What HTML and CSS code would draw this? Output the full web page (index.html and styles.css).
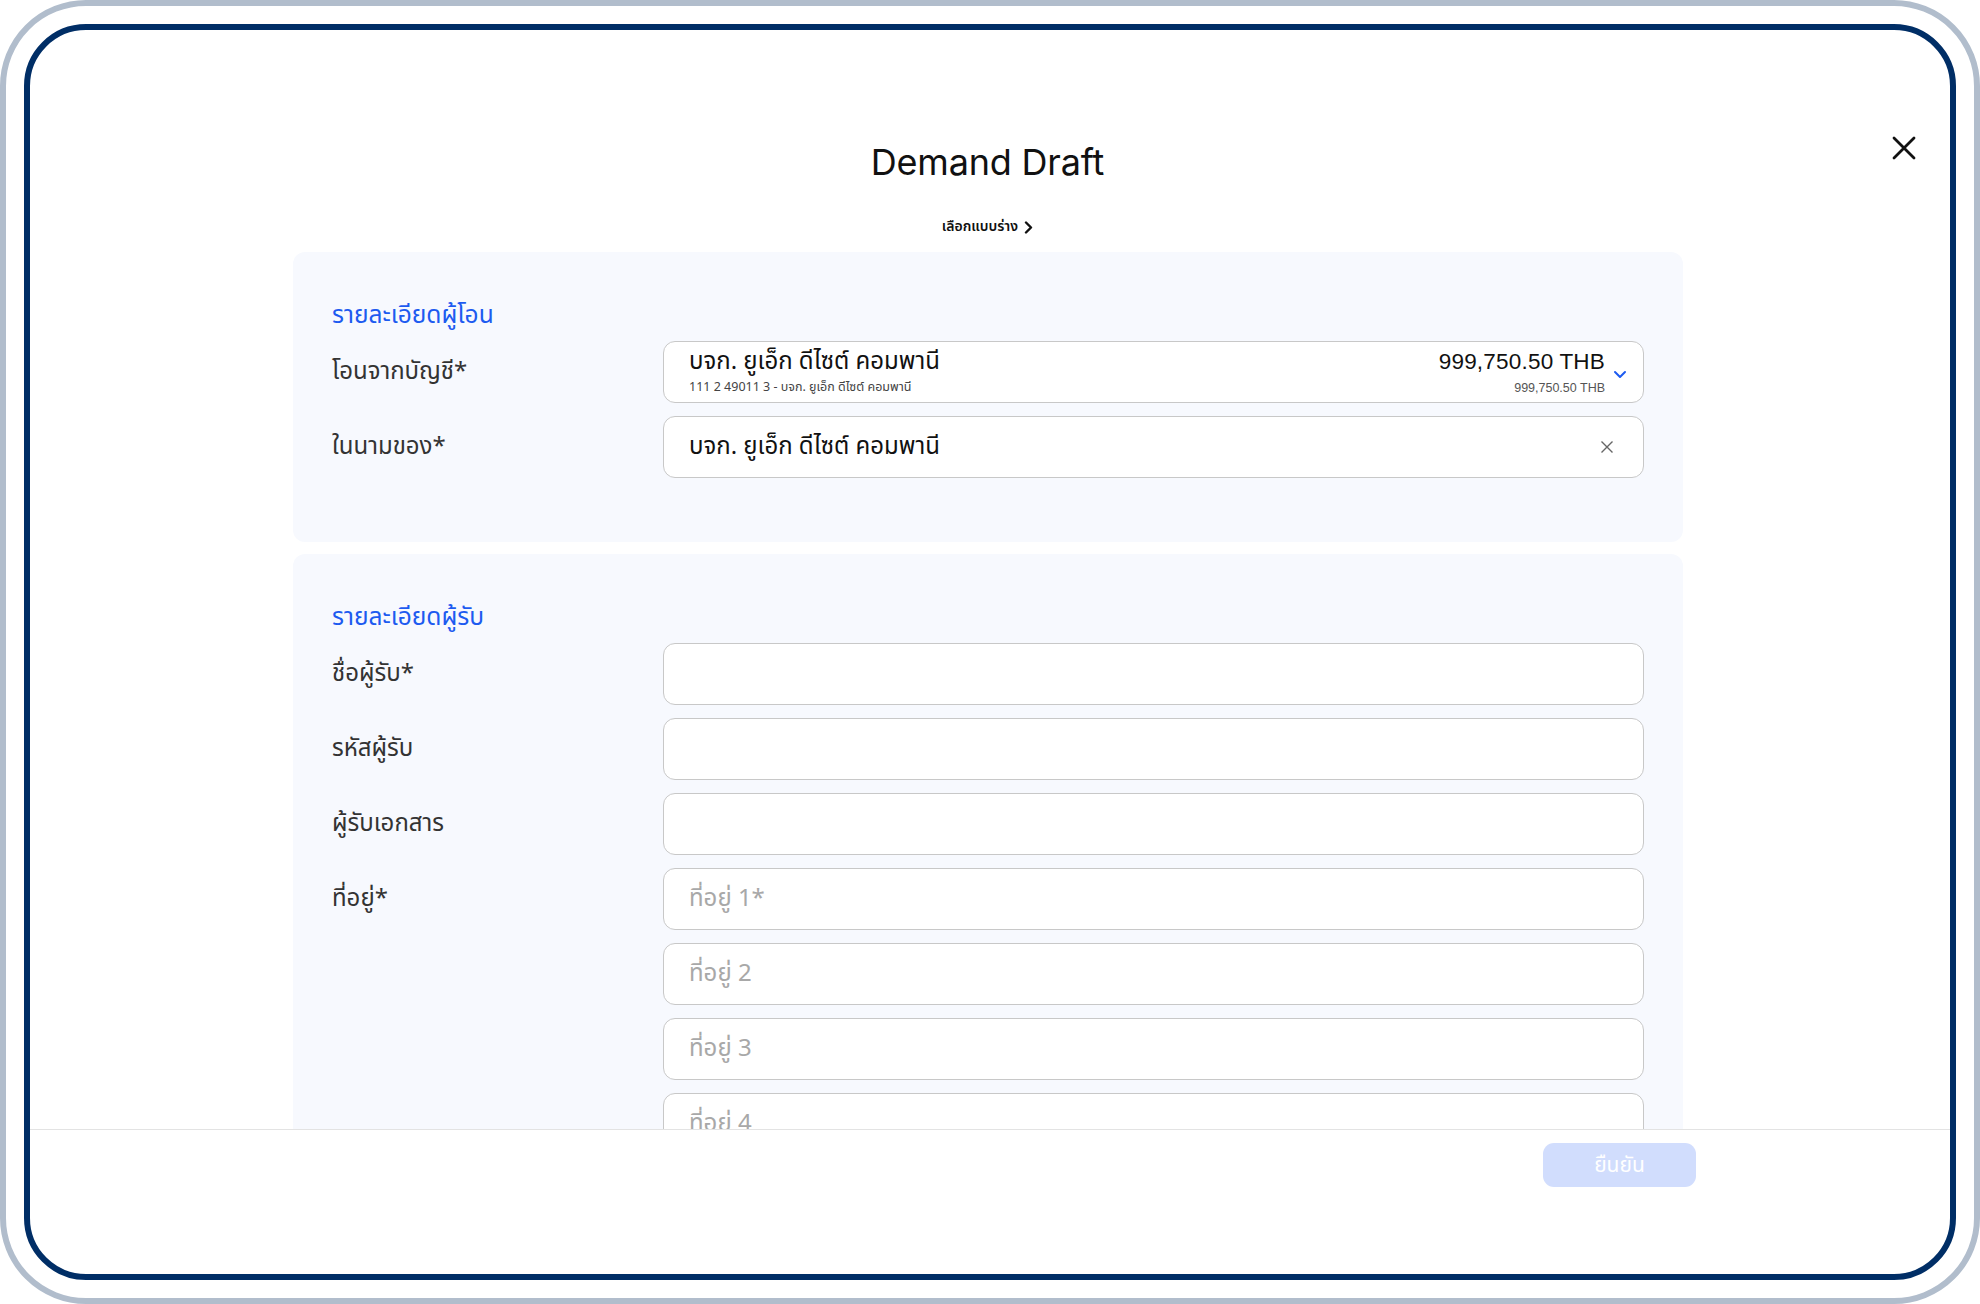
FILE: index.html
```html
<!DOCTYPE html>
<html lang="th">
  <head>
    <meta charset="UTF-8" />
    <meta name="viewport" content="width=device-width, initial-scale=1.0" />
    <title>Demand Draft</title>
    <link rel="stylesheet" href="styles.css">
  </head>
  <body>
    <div class="device">
      <div class="screen">
        <div class="modal-header">
          <h1>Demand Draft</h1>
          <button class="close-btn" aria-label="ปิด">
            <svg width="24" height="24" viewBox="0 0 24 24">
              <path d="M2 2 L22 22 M22 2 L2 22" stroke="#111" stroke-width="2.8" stroke-linecap="round" fill="none" />
            </svg>
          </button>
          <a class="template-link" href="#">เลือกแบบร่าง
            <svg width="9" height="13" viewBox="0 0 9 13">
              <path d="M2 1.5 L7 6.5 L2 11.5" stroke="#111" stroke-width="2.4" stroke-linecap="round" stroke-linejoin="round" fill="none" />
            </svg>
          </a>
        </div>

        <div class="content">
          <section class="card">
            <h2>รายละเอียดผู้โอน</h2>
            <div class="form-grid">
              <label>โอนจากบัญชี*</label>
              <div class="field account">
                <div class="account-info">
                  <div class="main">บจก. ยูเอ็ก ดีไซต์ คอมพานี</div>
                  <div class="sub">111 2 49011 3 - บจก. ยูเอ็ก ดีไซต์ คอมพานี</div>
                </div>
                <div class="account-amount">
                  <div class="main">999,750.50 THB</div>
                  <div class="sub">999,750.50 THB</div>
                </div>
                <svg class="chevron" width="14" height="9" viewBox="0 0 14 9">
                  <path d="M2 2 L7 7 L12 2" stroke="#1d5bf0" stroke-width="2" stroke-linecap="round" stroke-linejoin="round" fill="none" />
                </svg>
              </div>

              <label>ในนามของ*</label>
              <div class="field">
                <span class="value">บจก. ยูเอ็ก ดีไซต์ คอมพานี</span>
                <svg class="clear" width="14" height="14" viewBox="0 0 14 14">
                  <path d="M1.5 1.5 L12.5 12.5 M12.5 1.5 L1.5 12.5" stroke="#666" stroke-width="1.4" fill="none" />
                </svg>
              </div>
            </div>
          </section>

          <section class="card">
            <h2>รายละเอียดผู้รับ</h2>
            <div class="form-grid">
              <label>ชื่อผู้รับ*</label>
              <div class="field"></div>

              <label>รหัสผู้รับ</label>
              <div class="field"></div>

              <label>ผู้รับเอกสาร</label>
              <div class="field"></div>

              <label>ที่อยู่*</label>
              <div class="field"><span class="placeholder">ที่อยู่ 1*</span></div>

              <label></label>
              <div class="field"><span class="placeholder">ที่อยู่ 2</span></div>

              <label></label>
              <div class="field"><span class="placeholder">ที่อยู่ 3</span></div>

              <label></label>
              <div class="field"><span class="placeholder">ที่อยู่ 4</span></div>

              <label></label>
              <div class="field"></div>
            </div>
          </section>
        </div>

        <div class="modal-footer">
          <button class="confirm-btn" disabled>ยืนยัน</button>
        </div>
      </div>
    </div>
  </body>
</html>
```

FILE: styles.css
```css
body {
  margin: 0;
  font-family: "Noto Sans Thai", "Noto Sans", "Liberation Sans", sans-serif;
  color: #111;
  background: #fff;
}
.device {
  width: 1980px;
  height: 1304px;
  box-sizing: border-box;
  border: 6px solid #b1bdcc;
  border-radius: 86px;
  padding: 18px;
}
.screen {
  height: 100%;
  box-sizing: border-box;
  border: 6px solid #002e66;
  border-radius: 62px;
  display: flex;
  flex-direction: column;
  overflow: hidden;
  background: #fff;
}
.modal-header {
  position: relative;
  display: flex;
  flex-direction: column;
  align-items: center;
  padding: 108px 5px 0 0;
}
h1 {
  margin: 0;
  font-family: Inter, "Liberation Sans", sans-serif;
  font-weight: 400;
  font-size: 36px;
  line-height: 48px;
  letter-spacing: -0.2px;
}
.close-btn {
  position: absolute;
  top: 106px;
  right: 34px;
  background: none;
  border: none;
  padding: 0;
  cursor: pointer;
}
.template-link {
  display: flex;
  align-items: center;
  gap: 6px;
  margin-top: 31px;
  font-size: 14px;
  font-weight: 600;
  line-height: 20px;
  color: #111;
  text-decoration: none;
}
.content {
  flex: 1;
  overflow: hidden;
  padding: 15px 4px 0 0;
}
.card {
  width: 1390px;
  margin: 0 auto 12px;
  box-sizing: border-box;
  padding: 48px 39px 64px;
  background: #f7f9fe;
  border-radius: 12px;
}
h2 {
  margin: 0 0 9px;
  font-size: 24.5px;
  font-weight: 400;
  line-height: 32px;
  color: #1d5bf0;
}
.form-grid {
  display: grid;
  grid-template-columns: 331px 1fr;
  row-gap: 13px;
}
.form-grid label {
  display: flex;
  align-items: center;
  font-size: 24px;
  color: #333;
}
.field {
  height: 62px;
  box-sizing: border-box;
  border: 1.5px solid #c8c8c8;
  border-radius: 12px;
  background: #fff;
  padding: 0 29px 0 25px;
  display: flex;
  align-items: center;
  font-size: 24px;
}
.field .value {
  flex: 1;
}
.placeholder {
  color: #a8a8a8;
}
.account {
  padding-right: 16px;
  gap: 8px;
}
.account-info {
  flex: 1;
}
.account .main {
  font-size: 24px;
  line-height: 28px;
}
.account .sub {
  font-size: 12.5px;
  line-height: 16px;
  margin-top: 4px;
  color: #444;
}
.account-amount {
  text-align: right;
}
.account-amount .main {
  font-family: "Liberation Sans", sans-serif;
  font-size: 22.5px;
  letter-spacing: 0.2px;
}
.account-amount .sub {
  font-family: "Liberation Sans", sans-serif;
  color: #555;
}
.chevron {
  margin-top: 4px;
}
.modal-footer {
  height: 145px;
  border-top: 1px solid #e3e3e3;
  display: flex;
  justify-content: flex-end;
  align-items: flex-start;
  padding: 13px 254px 0 0;
  box-sizing: border-box;
  flex-shrink: 0;
}
.confirm-btn {
  width: 153px;
  height: 44px;
  border: none;
  border-radius: 11px;
  background: #d1ddfd;
  color: #fff;
  font-family: inherit;
  font-size: 21px;
  cursor: default;
}
```
